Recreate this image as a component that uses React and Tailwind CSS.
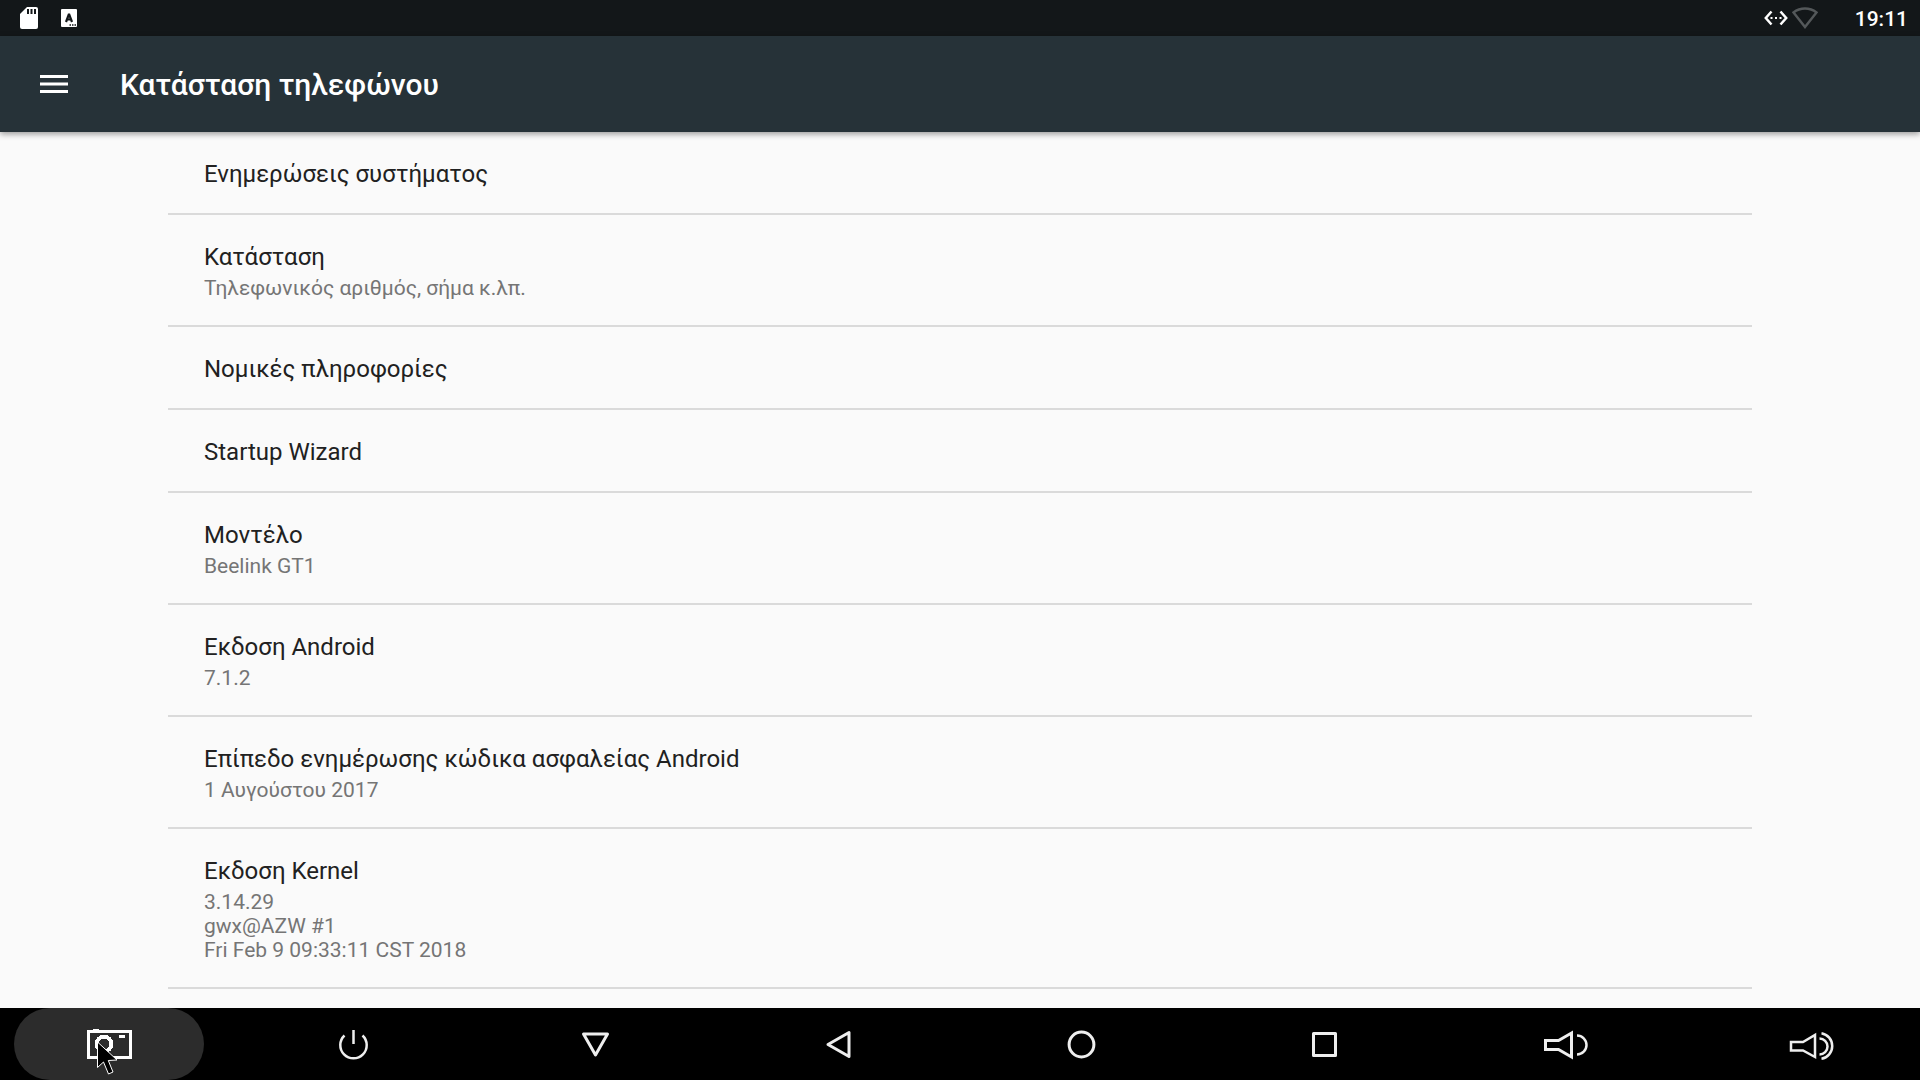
import React from 'react';

const items = [
    { title: 'Ενημερώσεις συστήματος' },
    { title: 'Κατάσταση', summary: ['Τηλεφωνικός αριθμός, σήμα κ.λπ.'] },
    { title: 'Νομικές πληροφορίες' },
    { title: 'Startup Wizard' },
    { title: 'Μοντέλο', summary: ['Beelink GT1'] },
    { title: 'Εκδοση Android', summary: ['7.1.2'] },
    { title: 'Επίπεδο ενημέρωσης κώδικα ασφαλείας Android', summary: ['1 Αυγούστου 2017'] },
    { title: 'Εκδοση Kernel', summary: ['3.14.29', 'gwx@AZW #1', 'Fri Feb 9 09:33:11 CST 2018'] },
];

const navButtons = [
    {
        label: 'Screenshot',
        active: true,
        icon: (
            <g shapeRendering="crispEdges">
                <rect x="3.5" y="11.5" width="42" height="26" strokeWidth="3" />
                <rect x="8" y="9" width="6" height="2" fill="#fff" stroke="none" />
                <rect x="34" y="15" width="6" height="3" fill="#fff" stroke="none" />
                <circle cx="19" cy="24" r="7.3" strokeWidth="4" />
            </g>
        ),
    },
    { label: 'Power', icon: <path d="M25.5 10v14M16.5 15.5a13.2 13.2 0 1 0 18 0" strokeWidth="2.5" /> },
    { label: 'Hide', icon: <path d="M12.5 14h24l-12 21z" strokeWidth="3" /> },
    { label: 'Back', icon: <path d="M35 12.5v24l-21-12z" strokeWidth="3" /> },
    { label: 'Home', icon: <circle cx="23.5" cy="24.5" r="12.4" strokeWidth="3" /> },
    { label: 'Recents', icon: <rect x="12.5" y="13.5" width="22" height="22" strokeWidth="3" /> },
    {
        label: 'Volume down',
        icon: (
            <>
                <path d="M1.5 20.5h13L27.5 13v24l-13-7.5h-13z" strokeWidth="3" strokeLinejoin="miter" />
                <path d="M33 15.5a9.5 9.5 0 0 1 0 19" strokeWidth="2.5" />
            </>
        ),
    },
    {
        label: 'Volume up',
        icon: (
            <>
                <path d="M4 22h12l12-7v22l-12-6.5H4z" strokeWidth="2.5" strokeLinejoin="miter" />
                <path d="M32.5 18.5a8 8 0 0 1 0 16M34.5 13.2a13 13 0 0 1 0 25.6" strokeWidth="2.5" />
            </>
        ),
    },
];

function StatusBar() {
    return (
        <div className="flex h-9 shrink-0 items-center justify-between bg-[#131719] pl-5 pr-3">
            <div className="flex items-center gap-[23px]">
                <svg width="18" height="22" viewBox="0 0 18 22">
                    <path d="M7 0h9a2 2 0 0 1 2 2v18a2 2 0 0 1-2 2H2a2 2 0 0 1-2-2V7z" fill="#fff" />
                    <path d="M8 2v5M11.5 2v5M15 2v5" stroke="#131719" strokeWidth="2" />
                </svg>
                <svg width="16" height="18" viewBox="0 0 16 18">
                    <rect width="16" height="18" rx="1" fill="#fff" />
                    <path d="M5 13 8 5l3 8M6 10.500h4" stroke="#131719" strokeWidth="2.2" strokeLinejoin="bevel" fill="none" />
                    <path d="M8.5 16H10M11 16h1.500M13.500 16H15" stroke="#131719" strokeWidth="1.5" />
                </svg>
            </div>
            <div className="flex items-center">
                <svg width="24" height="16" viewBox="0 0 24 16" fill="none" stroke="#fff" strokeWidth="2.5">
                    <path d="M7.500 1.500 1.800 8l5.700 6.500M16.500 1.500 22.200 8l-5.700 6.500" />
                    <path d="M6.500 8h2M11 8h2M15.500 8h2" strokeWidth="2" />
                </svg>
                <svg className="ml-1" width="26" height="22" viewBox="0 0 26 22" fill="none" stroke="#54585a" strokeWidth="2.5">
                    <path d="M1.500 5.500a19 19 0 0 1 23 0L13 20z" />
                </svg>
                <span className="ml-[37px] pt-px text-[21px] font-medium leading-6 text-white">19:11</span>
            </div>
        </div>
    );
}

function PreferenceRow({ title, summary }) {
    return (
        <li className="border-b-2 border-[#dadada]">
            <button className="block w-full px-9 pb-[25px] pt-7 text-left">
                <span className="block text-2xl leading-7 text-[#212121]">{title}</span>
                {summary && (
                    <span className="mt-[5px] block text-[21px] leading-6 text-[#757575]">
                        {summary.map((line) => (
                            <span key={line} className="block">{line}</span>
                        ))}
                    </span>
                )}
            </button>
        </li>
    );
}

function NavButton({ label, icon, active }) {
    return (
        <button
            aria-label={label}
            className={`relative flex h-[72px] w-[190px] items-center justify-center rounded-full ${active ? 'bg-[#2c2c2c]' : ''}`}
        >
            <svg width="48" height="48" viewBox="0 0 48 48" fill="none" stroke={active ? '#fff' : '#eee'} strokeLinejoin="round">
                {icon}
            </svg>
            {/* mouse pointer */}
            {active && (
                <svg className="absolute left-[83px] top-[33px]" width="22" height="35" viewBox="0 0 22 35">
                    <path d="M.5 1v25.500l6-5.500 5 12 4.500-2-4.700-11.500 8.700-.5z" fill="#000" stroke="#fff" />
                </svg>
            )}
        </button>
    );
}

export default function App() {
    return (
        <div className="flex h-screen flex-col overflow-hidden bg-[#fafafa] font-['Roboto','Noto_Sans',sans-serif]">
            <StatusBar />
            <header className="z-10 flex h-24 shrink-0 items-center bg-[#263238] pl-10 shadow-[0_2px_6px_rgba(0,0,0,0.4)]">
                <button aria-label="Menu">
                    <svg width="28" height="18" viewBox="0 0 28 18" fill="#fff">
                        <path d="M0 0h28v3H0zM0 7.500h28v3H0zM0 15h28v3H0z" />
                    </svg>
                </button>
                <h1 className="ml-[52px] pt-0.5 text-3xl font-medium text-white">Κατάσταση τηλεφώνου</h1>
            </header>
            <main className="min-h-0 flex-1 overflow-hidden px-[168px]">
                <ul>
                    {items.map((item) => (
                        <PreferenceRow key={item.title} {...item} />
                    ))}
                </ul>
            </main>
            <nav className="flex shrink-0 justify-between bg-black px-3.5">
                {navButtons.map((button) => (
                    <NavButton key={button.label} {...button} />
                ))}
            </nav>
        </div>
    );
}
